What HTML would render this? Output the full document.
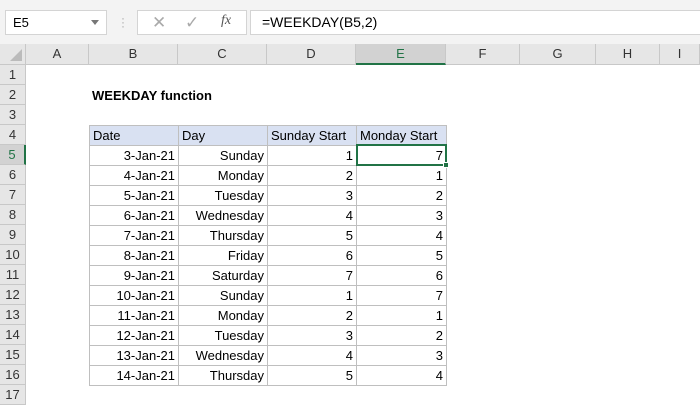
<!DOCTYPE html>
<html><head><style>
*{margin:0;padding:0;box-sizing:border-box}
body{width:700px;height:400px;background:#fff;font-family:"Liberation Sans",Calibri,sans-serif;font-size:13px;color:#000;position:relative;overflow:hidden}
.top{position:absolute;left:0;top:0;width:700px;height:44px;background:#f3f3f3}
.box{position:absolute;background:#fff;border:1px solid #d4d4d4}
.ch{position:absolute;top:44px;height:21px;background:#e6e6e6;border-right:1px solid #c8c8c8;border-bottom:1px solid #c8c8c8;text-align:center;line-height:20px;color:#333;font-size:13px}
.rh{position:absolute;left:0;width:26px;height:20px;background:#e6e6e6;border-bottom:1px solid #c8c8c8;border-right:1px solid #c8c8c8;text-align:center;line-height:20px;color:#333;font-size:13px}
table{position:absolute;left:89px;top:125px;border-collapse:collapse;table-layout:fixed}
td{border:1px solid #bfbfbf;height:20px;padding:0 3px;text-align:right;white-space:nowrap;font-size:13px;line-height:18px}
tr.h td{background:#d9e1f2;text-align:left}
</style></head><body>
<div class="top"></div>
<div class="box" style="left:5px;top:10px;width:102px;height:25px;padding-left:7px;line-height:23px;font-size:13px">E5<span style="position:absolute;right:7px;top:9px;border:4px solid transparent;border-top:5px solid #777"></span></div>
<div style="position:absolute;left:121px;top:16px;color:#aaa;font-size:12px;line-height:4px">·<br>·<br>·</div>
<div class="box" style="left:137px;top:10px;width:110px;height:25px;color:#aaa">
<span style="position:absolute;left:14px;top:2px;font-size:17px">✕</span>
<span style="position:absolute;left:47px;top:2px;font-size:17px">✓</span>
<span style="position:absolute;left:83px;top:2px;font-size:14px;font-style:italic;font-family:'Liberation Serif',serif;color:#555">fx</span></div>
<div class="box" style="left:250px;top:10px;width:460px;height:25px;padding-left:11px;line-height:23px;font-size:14px">=WEEKDAY(B5,2)</div>
<div class="ch" style="left:0;width:26px;background:#e6e6e6"><span style="position:absolute;right:3px;bottom:3px;border-left:12px solid transparent;border-bottom:12px solid #bbb"></span></div>
<div class="ch" style="left:26px;width:63px">A</div>
<div class="ch" style="left:89px;width:89px">B</div>
<div class="ch" style="left:178px;width:89px">C</div>
<div class="ch" style="left:267px;width:89px">D</div>
<div class="ch" style="left:356px;width:90px;background:#d2d2d2;color:#217346;border-bottom:2px solid #217346">E</div>
<div class="ch" style="left:446px;width:74px">F</div>
<div class="ch" style="left:520px;width:76px">G</div>
<div class="ch" style="left:596px;width:64px">H</div>
<div class="ch" style="left:660px;width:40px">I</div>
<div class="rh" style="top:65px">1</div><div class="rh" style="top:85px">2</div><div class="rh" style="top:105px">3</div><div class="rh" style="top:125px">4</div>
<div class="rh" style="top:145px;background:#d2d2d2;color:#217346;border-right:2px solid #217346">5</div>
<div class="rh" style="top:165px">6</div><div class="rh" style="top:185px">7</div><div class="rh" style="top:205px">8</div><div class="rh" style="top:225px">9</div><div class="rh" style="top:245px">10</div><div class="rh" style="top:265px">11</div><div class="rh" style="top:285px">12</div><div class="rh" style="top:305px">13</div><div class="rh" style="top:325px">14</div><div class="rh" style="top:345px">15</div><div class="rh" style="top:365px">16</div><div class="rh" style="top:385px">17</div>
<div style="position:absolute;left:92px;top:86px;font-weight:bold;font-size:13px;line-height:20px">WEEKDAY function</div>
<table>
<colgroup><col style="width:89px"><col style="width:89px"><col style="width:89px"><col style="width:90px"></colgroup>
<tr class="h"><td>Date</td><td>Day</td><td>Sunday Start</td><td>Monday Start</td></tr>
<tr><td>3-Jan-21</td><td>Sunday</td><td>1</td><td>7</td></tr>
<tr><td>4-Jan-21</td><td>Monday</td><td>2</td><td>1</td></tr>
<tr><td>5-Jan-21</td><td>Tuesday</td><td>3</td><td>2</td></tr>
<tr><td>6-Jan-21</td><td>Wednesday</td><td>4</td><td>3</td></tr>
<tr><td>7-Jan-21</td><td>Thursday</td><td>5</td><td>4</td></tr>
<tr><td>8-Jan-21</td><td>Friday</td><td>6</td><td>5</td></tr>
<tr><td>9-Jan-21</td><td>Saturday</td><td>7</td><td>6</td></tr>
<tr><td>10-Jan-21</td><td>Sunday</td><td>1</td><td>7</td></tr>
<tr><td>11-Jan-21</td><td>Monday</td><td>2</td><td>1</td></tr>
<tr><td>12-Jan-21</td><td>Tuesday</td><td>3</td><td>2</td></tr>
<tr><td>13-Jan-21</td><td>Wednesday</td><td>4</td><td>3</td></tr>
<tr><td>14-Jan-21</td><td>Thursday</td><td>5</td><td>4</td></tr>
</table>
<div style="position:absolute;left:356px;top:144px;width:91px;height:22px;border:2px solid #217346"></div>
<div style="position:absolute;left:443px;top:162px;width:6px;height:6px;background:#217346;border:1px solid #fff"></div>
</body></html>
